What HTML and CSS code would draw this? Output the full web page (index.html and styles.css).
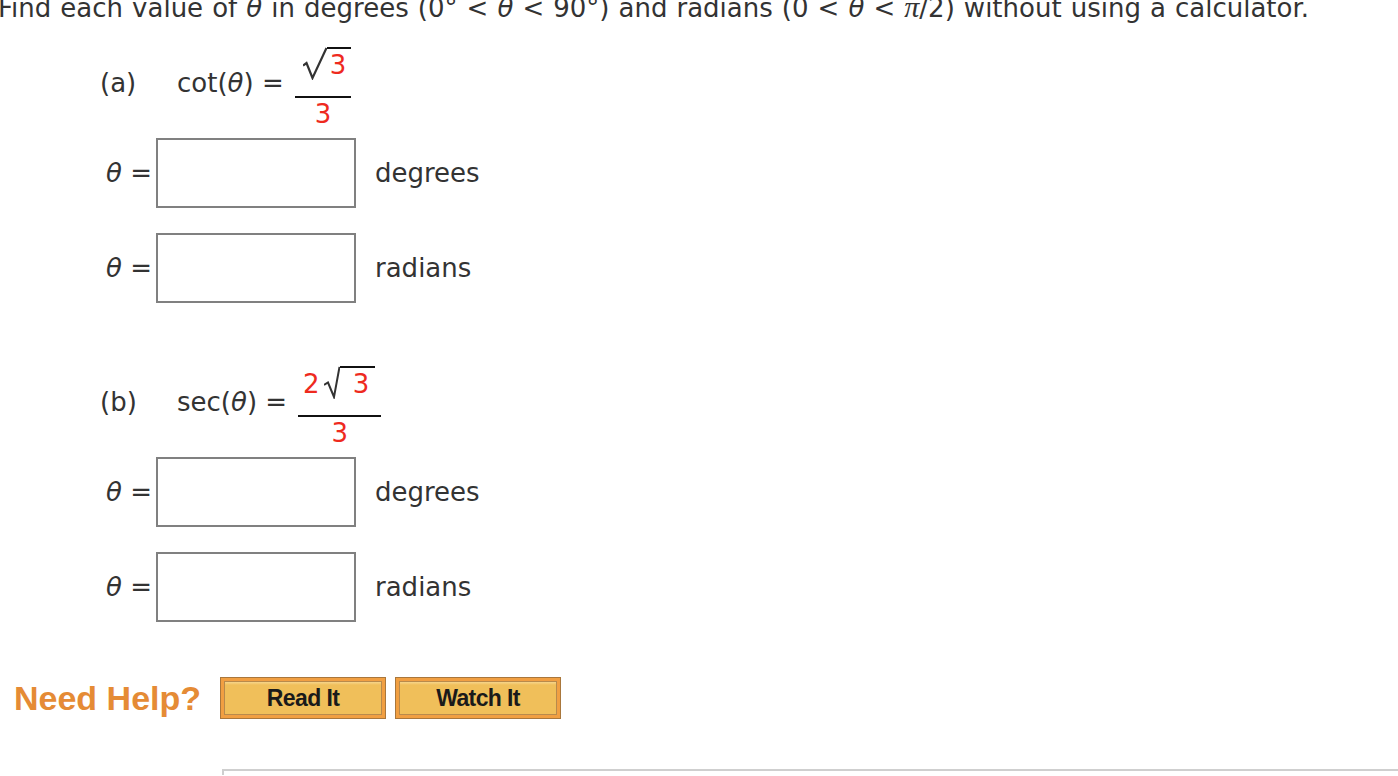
FILE: index.html
```html
<!doctype html>
<html lang="en">
<head>
<meta charset="UTF-8">
<title>Trig values</title>
<link rel="stylesheet" href="styles.css">
</head>
<body>
<div id="main">
<p class="intro">Find each value of <i class="th">θ</i> in degrees (0° &lt; <i class="th">θ</i> &lt; 90°) and radians (0 &lt; <i class="th">θ</i> &lt; <i class="pi">π</i>/2) without using a calculator.</p>

<!-- часть (a) -->
<div class="part">
<span class="part-label">(a)</span>
<span class="expr">cot(<i class="th">θ</i>) =</span>
<span class="frac frac-a">
<span class="num">
<svg class="root root-a" width="24" height="33" viewBox="0 0 24 33"><polyline points="0,18.5 3.5,16 9.5,31 23.5,1" fill="none" stroke="#333" stroke-width="2.2" stroke-linejoin="miter"/></svg>
<span class="rad">3</span>
</span>
<span class="den">3</span>
</span>
</div>
<div class="answer">
<span class="lhs"><i class="th">θ</i> =</span>
<input class="box" type="text">
<span class="unit">degrees</span>
</div>
<div class="answer">
<span class="lhs"><i class="th">θ</i> =</span>
<input class="box" type="text">
<span class="unit">radians</span>
</div>

<!-- часть (b) -->
<div class="part part-b">
<span class="part-label">(b)</span>
<span class="expr">sec(<i class="th">θ</i>) =</span>
<span class="frac frac-b">
<span class="num">
<span class="coef">2</span>
<svg class="root root-b" width="16" height="33" viewBox="0 0 16 33"><polyline points="0,19 4,16.5 10,31 15.5,1" fill="none" stroke="#333" stroke-width="2" stroke-linejoin="miter"/></svg>
<span class="rad">3</span>
</span>
<span class="den">3</span>
</span>
</div>
<div class="answer">
<span class="lhs"><i class="th">θ</i> =</span>
<input class="box" type="text">
<span class="unit">degrees</span>
</div>
<div class="answer">
<span class="lhs"><i class="th">θ</i> =</span>
<input class="box" type="text">
<span class="unit">radians</span>
</div>

<div class="help">
<span class="help-title">Need Help?</span>
<button class="help-btn"><span>Read It</span></button>
<button class="help-btn"><span>Watch It</span></button>
</div>

<div class="next-box"></div>
</div>
</body>
</html>
```

FILE: styles.css
```css
body {
margin: 0;
background: #fff;
color: #333;
font-family: "DejaVu Sans", Verdana, sans-serif;
font-size: 26px;
line-height: 30px;
overflow: hidden;
}
#main {
display: flow-root;
height: 776px;
overflow: hidden;
}
.intro {
margin: -7px 0 0 -2px;
white-space: nowrap;
word-spacing: 0.8px;
}
.th {
font-style: italic;
}
.pi {
font-family: "Liberation Serif", serif;
font-style: italic;
font-size: 30px;
line-height: 20px;
}
.part {
display: flex;
align-items: flex-start;
margin-top: 24px;
padding-left: 100px;
}
.part-label {
width: 77px;
margin-top: 21px;
}
.expr {
margin-top: 21px;
margin-right: 11px;
}
.frac {
display: inline-flex;
flex-direction: column;
color: #ee2a1e;
}
.num {
display: flex;
align-items: flex-start;
padding-bottom: 15px;
}
.root {
display: block;
}
.rad {
border-top: 2px solid #111;
line-height: 32px;
}
.den {
border-top: 2px solid #111;
text-align: center;
padding-top: 1px;
}
.frac-a .num {
padding-left: 8px;
}
.frac-a .rad {
padding: 0 5px 0 3px;
}
.frac-b .num {
padding-left: 5px;
padding-right: 6px;
}
.frac-b .rad {
padding: 0 6px 0 13px;
}
.coef {
margin-top: 3px;
margin-right: 4px;
}
.answer {
display: flex;
align-items: center;
padding-left: 106px;
height: 70px;
margin-top: 25px;
}
.part + .answer {
margin-top: 9px;
}
.lhs {
width: 50px;
}
.box {
box-sizing: border-box;
width: 200px;
height: 70px;
border: 2px solid #808080;
background: #fff;
margin: 0;
padding: 0;
}
.unit {
margin-left: 19px;
}
.part-b {
margin-top: 63px;
}
.help {
display: flex;
align-items: center;
margin-top: 55px;
padding-left: 14px;
}
.help-title {
font-family: "Liberation Sans", Arial, sans-serif;
font-weight: bold;
font-size: 34px;
color: #e58b35;
margin-right: 19px;
}
.help-btn {
box-sizing: border-box;
width: 166px;
height: 42px;
padding: 3px;
margin: 0 9px 0 0;
border: 1px solid #a9773c;
background: #f19f42;
cursor: pointer;
}
.help-btn span {
display: block;
height: 100%;
box-sizing: border-box;
border: 1px solid #b88a4c;
background: linear-gradient(#f6d58c 0, #f0bf5a 3px, #f0bf5a 100%);
font-family: "Liberation Sans", Arial, sans-serif;
font-weight: bold;
font-size: 23px;
line-height: 32px;
color: #1a1a1a;
letter-spacing: -0.6px;
}
.next-box {
margin: 50px 0 0 222px;
height: 4px;
border-top: 2px solid #cfcfcf;
border-left: 2px solid #cfcfcf;
}
```
